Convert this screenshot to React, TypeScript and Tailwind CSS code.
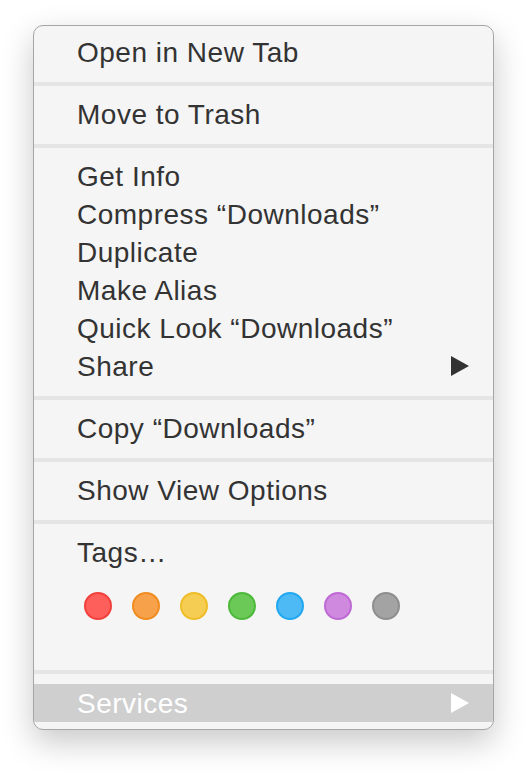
const font = { fontFamily: '"Liberation Sans", Arial, sans-serif' }

function Separator({ last }: { last?: boolean }) {
  return (
    <div className={last ? "pt-[11px] pb-[10px]" : "pt-[11px] pb-[9px]"}>
      <div className="h-[4px] bg-[#e5e5e5]" />
    </div>
  )
}

function Item({ label, submenu }: { label: string; submenu?: boolean }) {
  return (
    <div className="flex h-[38px] items-center justify-between pl-[43px] pr-[24px] text-[28px] leading-none tracking-[0.5px] text-[#333333]">
      <span className="pt-[2px]">{label}</span>
      {submenu && (
        <svg width="18" height="20" viewBox="0 0 18 20">
          <path d="M0 0 L18 10 L0 20 Z" fill="#333333" />
        </svg>
      )}
    </div>
  )
}

const tags = [
  "bg-[#ff5f5b] border-[#f2403c]",
  "bg-[#f7a14a] border-[#f08c20]",
  "bg-[#f4cd52] border-[#efbd2a]",
  "bg-[#6bc957] border-[#4cb93a]",
  "bg-[#4db9f5] border-[#22a8f0]",
  "bg-[#cf8ae0] border-[#bf69d4]",
  "bg-[#a3a3a3] border-[#8e8e8e]",
]

export default function App() {
  return (
    <div className="min-h-screen bg-white pt-[25px] pl-[33px]" style={font}>
      <div className="w-[461px] overflow-hidden rounded-[10px] border border-[#a6a6a6] bg-[#f5f5f5] pt-[7px] pb-[7px] shadow-[0_12px_32px_rgba(0,0,0,0.22)]">
        <Item label="Open in New Tab" />
        <Separator />
        <Item label="Move to Trash" />
        <Separator />
        <Item label="Get Info" />
        <Item label="Compress “Downloads”" />
        <Item label="Duplicate" />
        <Item label="Make Alias" />
        <Item label="Quick Look “Downloads”" />
        <Item label="Share" submenu />
        <Separator />
        <Item label="Copy “Downloads”" />
        <Separator />
        <Item label="Show View Options" />
        <Separator />
        <Item label="Tags…" />
        <div className="flex gap-[20px] pl-[50px] pt-[21px] pb-[39px]">
          {tags.map((t) => (
            <div key={t} className={`h-[28px] w-[28px] rounded-full border-2 ${t}`} />
          ))}
        </div>
        <Separator last />
        <div className="flex h-[38px] items-center justify-between bg-[#cfcfcf] pl-[43px] pr-[24px] text-[28px] leading-none tracking-[0.5px] text-white">
          <span className="pt-[2px]">Services</span>
          <svg width="18" height="20" viewBox="0 0 18 20">
            <path d="M0 0 L18 10 L0 20 Z" fill="#ffffff" />
          </svg>
        </div>
      </div>
    </div>
  )
}
